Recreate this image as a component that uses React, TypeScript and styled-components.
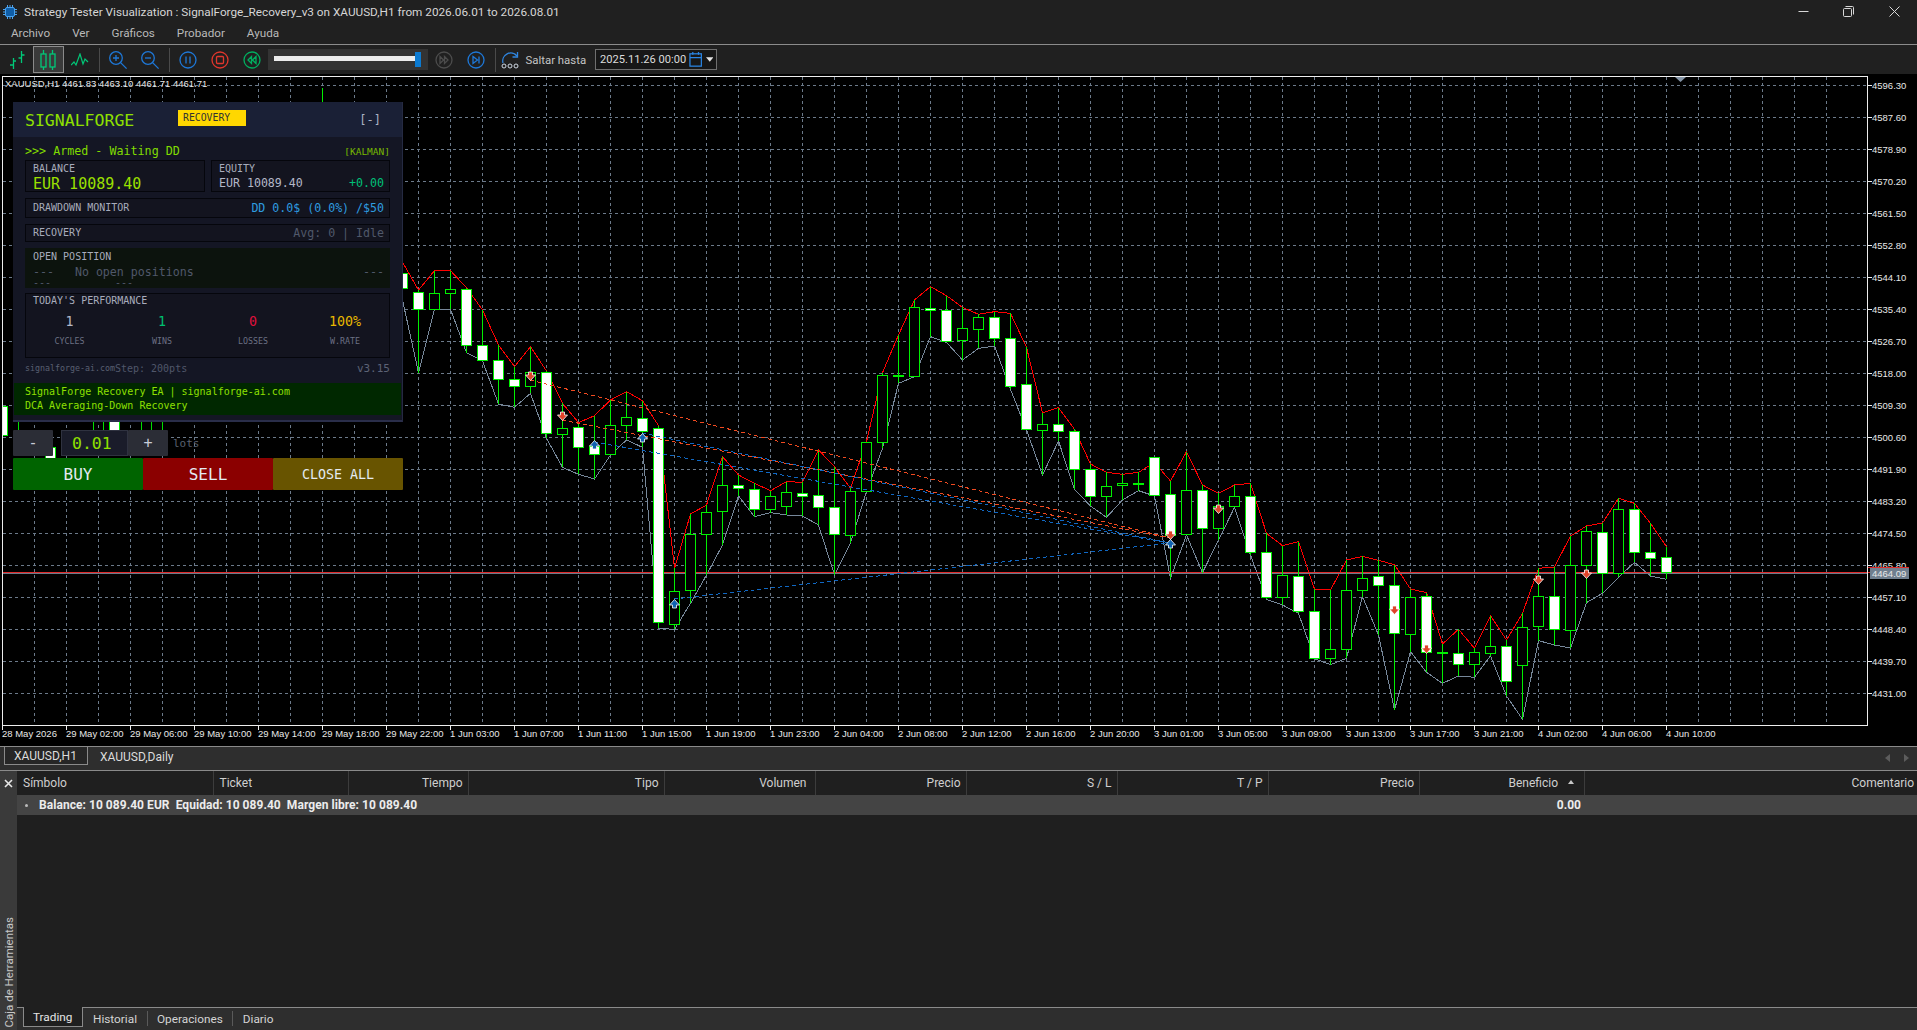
import styled, { createGlobalStyle } from "styled-components";

const GlobalStyle = createGlobalStyle`
  html, body, #root { margin: 0; height: 100%; }
  body {
    background: #1f1f1f;
    overflow: hidden;
    font-family: Roboto, "Liberation Sans", sans-serif;
    font-size: 12px;
    color: #d4d4d4;
  }
  * { box-sizing: border-box; }
`;

const MONO = `"DejaVu Sans Mono", "Liberation Mono", monospace`;

/* ---------- window chrome ---------- */

const Page = styled.div`
  display: flex;
  flex-direction: column;
  height: 100vh;
`;

const TitleBar = styled.div`
  display: flex;
  align-items: center;
  height: 23px;
  padding-left: 3px;
  background: #202020;
  flex: none;
`;

const TitleText = styled.span`
  margin-left: 7px;
  color: #d6d6d6;
  font-size: 11.75px;
  white-space: nowrap;
`;

const WindowButtons = styled.div`
  display: flex;
  margin-left: auto;
`;

const WindowButton = styled.div`
  display: flex;
  width: 45.5px;
  height: 20px;
  align-items: center;
  justify-content: center;
  color: #d8d8d8;
`;

const MenuBar = styled.div`
  display: flex;
  align-items: center;
  gap: 22px;
  height: 22px;
  padding: 0 0 2px 11px;
  background: #202020;
  border-bottom: 1px solid #8c8c8c;
  flex: none;
`;

const MenuItem = styled.span`
  color: #b9b9b9;
  font-size: 11.7px;
`;

const Toolbar = styled.div`
  display: flex;
  align-items: center;
  height: 29px;
  padding-left: 1px;
  background: #202020;
  flex: none;
`;

const ToolButton = styled.div<{ $selected?: boolean; $w?: number }>`
  display: flex;
  align-items: center;
  justify-content: center;
  width: ${(p) => p.$w ?? 32}px;
  height: 27px;
  border: 1px solid ${(p) => (p.$selected ? "#8a8a8a" : "transparent")};
  background: ${(p) => (p.$selected ? "#3a3a3a" : "transparent")};
  flex: none;
`;

const ToolSep = styled.div<{ $ml: number; $mr: number }>`
  width: 1px;
  height: 24px;
  margin: 0 ${(p) => p.$mr}px 0 ${(p) => p.$ml}px;
  background: #4a4a4a;
  flex: none;
`;

const SliderBox = styled.div`
  position: relative;
  width: 160px;
  height: 21px;
  background: #333333;
  flex: none;
`;

const SliderTrack = styled.div`
  position: absolute;
  left: 6px;
  right: 7px;
  top: 7px;
  height: 5px;
  background: #ececec;
`;

const SliderThumb = styled.div`
  position: absolute;
  right: 7px;
  top: 3px;
  width: 6px;
  height: 15px;
  background: #0b7ad1;
`;

const JumpLabel = styled.span`
  margin: 0 9px 0 5px;
  color: #c4c4c4;
  font-size: 11.4px;
  white-space: nowrap;
`;

const DateBox = styled.div`
  display: flex;
  align-items: center;
  gap: 3px;
  width: 122px;
  height: 21px;
  padding: 0 3px 0 4px;
  background: #171717;
  border: 1px solid #6f6f6f;
  color: #dcdcdc;
  font-size: 11.1px;
  white-space: nowrap;
  flex: none;
`;

const DateText = styled.span`
  margin-right: auto;
`;

/* ---------- chart ---------- */

const ChartArea = styled.div`
  position: relative;
  height: 672px;
  background: #000;
  flex: none;
`;

const ChartSvg = styled.svg`
  display: block;
  width: 1917px;
  height: 672px;
`;

const AxisText = styled.text`
  fill: #e8e8e8;
  font-family: "Liberation Sans", Arial, sans-serif;
  font-size: 9.5px;
`;

/* ---------- expert advisor panel (floats over the chart) ---------- */

const EaOverlay = styled.div`
  position: absolute;
  left: 13px;
  top: 28px;
  width: 390px;
  font-family: ${MONO};
`;

const Panel = styled.div`
  display: flex;
  flex-direction: column;
  height: 320px;
  background: #141624;
  border-right: 1px solid #252a42;
  border-bottom: 2px solid #2a2e4a;
`;

const PanelHeader = styled.div`
  display: flex;
  align-items: center;
  height: 35px;
  padding: 1px 21px 0 12px;
  background: #1a2036;
  flex: none;
`;

const Brand = styled.span`
  width: 153px;
  color: #8fe000;
  font-size: 16.5px;
`;

const ModeBadge = styled.span`
  display: flex;
  align-items: center;
  width: 68px;
  height: 16px;
  margin-top: -5px;
  padding-left: 5px;
  background: #ffd700;
  color: #333;
  font-size: 9.8px;
`;

const Collapse = styled.span`
  margin-left: auto;
  color: #a9b2c4;
  font-size: 12px;
`;

const PanelBody = styled.div`
  display: flex;
  flex-direction: column;
  padding: 0 12px;
`;

const StatusRow = styled.div`
  display: flex;
  align-items: center;
  justify-content: space-between;
  height: 23px;
  padding-top: 5px;
  color: #80dc00;
  font-size: 11.7px;
`;

const EngineTag = styled.span`
  color: #78b800;
  font-size: 9.5px;
`;

const CardRow = styled.div`
  display: grid;
  grid-template-columns: 180px 179px;
  gap: 6px;
  margin-bottom: 6px;
`;

const Card = styled.div<{ $h: number; $pt?: number; $tint?: boolean }>`
  height: ${(p) => p.$h}px;
  padding: ${(p) => p.$pt ?? 0}px 5px 0 7px;
  background: ${(p) => (p.$tint ? "#0c130d" : "#13141f")};
  border: 1px solid ${(p) => (p.$tint ? "#0c130d" : "#05060c")};
  overflow: hidden;
`;

const MetricRow = styled.div`
  display: flex;
  align-items: center;
  justify-content: space-between;
  height: 100%;
`;

const SpacedCard = styled(Card)<{ $mb: number }>`
  margin-bottom: ${(p) => p.$mb}px;
`;

const CardLabel = styled.div`
  color: #a8acbc;
  font-size: 10px;
  line-height: 12px;
  white-space: nowrap;
`;

const BalanceValue = styled.div`
  margin-top: 1px;
  color: #9be000;
  font-size: 15px;
  line-height: 16px;
  white-space: nowrap;
`;

const EquityLine = styled.div`
  display: flex;
  justify-content: space-between;
  align-items: baseline;
  margin-top: 1px;
  color: #b4b8c8;
  font-size: 11.6px;
  line-height: 14px;
  white-space: nowrap;
`;

const DeltaValue = styled.span`
  color: #00c078;
`;

const MetricValue = styled.span<{ $color: string }>`
  color: ${(p) => p.$color};
  font-size: 11.6px;
  white-space: nowrap;
`;

const PositionLine = styled.div`
  display: flex;
  justify-content: space-between;
  color: #50586a;
  font-size: 11.6px;
  line-height: 13px;
  margin-top: 3px;
  white-space: nowrap;
`;

const PositionMessage = styled.span`
  margin: 0 auto 0 21px;
`;

const PositionGap = styled.span<{ $w: number }>`
  width: ${(p) => p.$w}px;
  flex: none;
`;

const PositionTail = styled.div`
  display: flex;
  color: #50586a;
  font-size: 10px;
  line-height: 10px;
  margin-top: -1px;
  white-space: nowrap;
`;

const PerfGrid = styled.div`
  display: grid;
  grid-template-columns: 85px 100px 82px 102px;
  margin: 7px 0 0 -6px;
  width: 369px;
  justify-items: center;
`;

const PerfCell = styled.div`
  display: flex;
  flex-direction: column;
  align-items: center;
`;

const PerfValue = styled.div<{ $color: string }>`
  color: ${(p) => p.$color};
  font-size: 13.3px;
  line-height: 16px;
`;

const PerfLabel = styled.div`
  margin-top: 6px;
  color: #6c7184;
  font-size: 8.3px;
  line-height: 10px;
`;

const PanelFooter = styled.div`
  display: flex;
  align-items: center;
  height: 25px;
  padding: 0 0 5px 0;
  color: #50566a;
  font-size: 10px;
  white-space: nowrap;
`;

const FooterUrl = styled.span`
  color: #5a6072;
  font-size: 8.3px;
`;

const FooterVersion = styled.span`
  margin-left: auto;
  color: #5c6276;
  font-size: 11px;
`;

const Banner = styled.div`
  height: 32px;
  margin: 0 1px;
  padding: 2px 11px;
  background: #002800;
  color: #8fe000;
  font-size: 10px;
  line-height: 14px;
  white-space: nowrap;
  flex: none;
`;

const LotRow = styled.div`
  display: flex;
  align-items: center;
  height: 26px;
  margin-top: 8px;
`;

const LotButton = styled.div<{ $gap?: number }>`
  display: flex;
  align-items: center;
  justify-content: center;
  width: 40px;
  height: 26px;
  margin-right: ${(p) => p.$gap ?? 0}px;
  background: #2b2d36;
  border-radius: 1px;
  color: #c8ccd8;
  font-size: 15px;
`;

const LotInput = styled.div`
  display: flex;
  align-items: center;
  width: 67px;
  height: 26px;
  padding-left: 10px;
  background: #1a1c2a;
  border: 1px solid #2f3240;
  color: #8fe000;
  font-size: 16.5px;
`;

const LotUnit = styled.span`
  margin-left: 5px;
  color: #5a6070;
  font-size: 11px;
`;

const ActionRow = styled.div`
  display: grid;
  grid-template-columns: repeat(3, 130px);
  height: 32px;
  margin-top: 2px;
`;

const ActionButton = styled.div<{ $bg: string; $size: number }>`
  display: flex;
  align-items: center;
  justify-content: center;
  background: ${(p) => p.$bg};
  color: #e4ebf2;
  font-size: ${(p) => p.$size}px;
  border-radius: 1px;
`;

/* ---------- lower panes ---------- */

const ChartTabs = styled.div`
  display: flex;
  height: 25px;
  padding-left: 4px;
  background: #2e2e2e;
  border-top: 1px solid #8a8a8a;
  border-bottom: 1px solid #8a8a8a;
  flex: none;
`;

const ChartTab = styled.div<{ $active?: boolean }>`
  display: flex;
  align-items: center;
  width: ${(p) => (p.$active ? "84px" : "auto")};
  height: ${(p) => (p.$active ? 18 : 19)}px;
  padding-left: ${(p) => (p.$active ? 9 : 0)}px;
  margin-left: ${(p) => (p.$active ? 0 : 12)}px;
  background: ${(p) => (p.$active ? "#262626" : "transparent")};
  border: ${(p) => (p.$active ? "1px solid #8a8a8a" : "none")};
  border-top: none;
  color: #dcdcdc;
`;

const TabArrows = styled.div`
  display: flex;
  gap: 14px;
  align-items: center;
  margin-left: auto;
  padding-right: 8px;
  height: 21px;
`;

const Toolbox = styled.div`
  display: flex;
  flex: 1;
  min-height: 0;
`;

const ToolboxSide = styled.div`
  display: flex;
  flex-direction: column;
  align-items: center;
  justify-content: space-between;
  width: 17px;
  background: #3a3a3a;
  flex: none;
`;

const CloseMark = styled.div`
  height: 24px;
  display: flex;
  align-items: center;
  color: #e8e8e8;
`;

const SideLabel = styled.span`
  writing-mode: vertical-rl;
  transform: rotate(180deg);
  margin-bottom: 3px;
  color: #c8c8c8;
  font-size: 11.5px;
  white-space: nowrap;
`;

const ToolboxMain = styled.div`
  display: flex;
  flex-direction: column;
  flex: 1;
  min-width: 0;
  background: #1f1f1f;
`;

const COLUMNS = "196.5px 135px 120px 196px 151px 151px 151px 151px 151.5px 165px 1fr";

const HeaderRow = styled.div`
  display: grid;
  grid-template-columns: ${COLUMNS};
  height: 24px;
  flex: none;
`;

const HeaderCell = styled.div<{ $right?: boolean; $pr?: number }>`
  display: flex;
  align-items: center;
  justify-content: ${(p) => (p.$right ? "flex-end" : "flex-start")};
  gap: 10px;
  padding: 0 ${(p) => p.$pr ?? 5}px 0 6px;
  border-right: 1px solid #3c3c3c;
  color: #cfcfcf;
  &:last-child { border-right: none; padding-right: 3px; }
`;

const SortCaret = styled.span`
  width: 0;
  height: 0;
  margin: 0 5px 2px 0;
  border-left: 3.5px solid transparent;
  border-right: 3.5px solid transparent;
  border-bottom: 4px solid #c8c8c8;
`;

const BalanceRow = styled.div`
  display: grid;
  grid-template-columns: ${COLUMNS};
  height: 20px;
  align-items: center;
  background: #444444;
  color: #ececec;
  font-weight: 700;
  flex: none;
`;

const BalanceText = styled.div`
  grid-column: 1 / 10;
  display: flex;
  align-items: center;
  padding-left: 8px;
  letter-spacing: 0.05px;
  white-space: nowrap;
`;

const RowBullet = styled.span`
  width: 3px;
  height: 3px;
  margin-right: 11px;
  background: #bbb;
  border-radius: 50%;
`;

const BalanceProfit = styled.div`
  text-align: right;
  padding-right: 4px;
`;

const TableBody = styled.div`
  flex: 1;
`;

const BottomTabs = styled.div`
  display: flex;
  height: 23px;
  background: #2e2e2e;
  font-size: 11.8px;
  flex: none;
`;

const TabEdge = styled.div`
  width: 6px;
  border-top: 1px solid #8a8a8a;
  flex: none;
`;

const ActiveTab = styled.div`
  display: flex;
  align-items: center;
  width: 60px;
  height: 20px;
  padding-left: 9px;
  background: #1f1f1f;
  border: 1px solid #8a8a8a;
  border-top: none;
  color: #e4e4e4;
`;

const TabRest = styled.div`
  display: flex;
  align-items: center;
  flex: 1;
  height: 21px;
  padding-left: 10px;
  border-top: 1px solid #8a8a8a;
  box-sizing: content-box;
`;

const TabItem = styled.span`
  color: #d4d4d4;
`;

const TabDivider = styled.span`
  width: 1px;
  height: 15px;
  margin: 0 9.5px;
  background: #5a5a5a;
`;

/* ---------- chart data, in page pixels ---------- */

type Candle = { x: number; hi: number; top: number; bot: number; lo: number; white: boolean };

// [high, bodyTop, bodyBottom, low, white], read off at 3x and stepped 16px apart
type Raw = [number, number, number, number, number];

const block = (startX: number, originY: number, rows: Raw[]): Candle[] =>
  rows.map(([hi, top, bot, lo, white], i) => ({
    x: startX + i * 16,
    hi: originY + hi / 3,
    top: originY + top / 3,
    bot: originY + bot / 3,
    lo: originY + lo / 3,
    white: white === 1,
  }));

const candles: Candle[] = [
  { x: 2, hi: 404, top: 406, bot: 435, lo: 437, white: true },
  { x: 114, hi: 400, top: 416, bot: 430, lo: 432, white: true },
  { x: 50, hi: 440, top: 447, bot: 470, lo: 472, white: true },
  { x: 402, hi: 262, top: 273, bot: 288, lo: 300, white: true },
  ...block(418, 260, [
    [90, 97, 148, 338, 1], [32, 100, 148, 148, 0], [32, 88, 100, 148, 0], [83, 88, 256, 278, 1],
    [150, 256, 301, 303, 1], [255, 301, 358, 432, 1], [320, 358, 379, 442, 1], [260, 338, 379, 400, 0],
    [333, 338, 520, 535, 1], [430, 505, 523, 622, 0], [488, 502, 562, 643, 1], [467, 558, 583, 657, 1],
    [420, 496, 583, 585, 0], [395, 472, 496, 540, 0], [422, 475, 515, 562, 1], [497, 505, 1087, 1105, 1],
    [925, 994, 1092, 1108, 0], [762, 823, 992, 1030, 0], [735, 757, 823, 945, 0], [590, 677, 754, 855, 0],
    [645, 677, 685, 708, 1], [670, 688, 748, 770, 1], [692, 709, 748, 758, 0], [665, 697, 739, 765, 0],
    [667, 701, 709, 768, 1], [570, 707, 742, 795, 1], [620, 742, 823, 945, 1], [685, 694, 826, 848, 0],
    [545, 547, 694, 695, 0], [338, 346, 547, 565, 0],
  ]),
  ...block(898, 270, [
    [195, 316, 318, 340, 0], [90, 112, 320, 320, 0], [50, 116, 120, 200, 1], [77, 121, 214, 217, 1],
    [112, 176, 212, 270, 0], [133, 142, 178, 235, 0], [125, 142, 205, 228, 1], [130, 205, 350, 358, 1],
    [232, 343, 478, 480, 1], [428, 463, 482, 615, 0], [413, 463, 484, 513, 1], [478, 485, 598, 658, 1],
    [582, 598, 679, 708, 1], [607, 650, 679, 742, 0], [613, 640, 647, 690, 0], [607, 641, 644, 662, 0],
    [578, 563, 677, 678, 1], [633, 673, 795, 925, 1], [545, 661, 794, 795, 0], [645, 661, 775, 908, 1],
    [670, 709, 775, 810, 0], [645, 679, 710, 712, 0], [640, 679, 847, 855, 1], [790, 847, 982, 988, 1],
    [827, 916, 982, 1005, 0], [815, 920, 1024, 1030, 1], [957, 1024, 1166, 1166, 1], [960, 1138, 1166, 1184, 0],
  ]),
  ...block(1346, 440, [
    [360, 452, 628, 655, 0], [349, 415, 451, 470, 0], [361, 410, 436, 585, 1], [374, 436, 580, 810, 1],
    [447, 472, 583, 635, 0], [458, 470, 637, 697, 1], [612, 637, 640, 730, 0], [568, 641, 673, 708, 1],
    [625, 637, 673, 712, 0], [527, 619, 640, 648, 0], [600, 620, 724, 768, 1], [520, 562, 676, 838, 0],
    [385, 470, 559, 602, 0], [381, 470, 568, 615, 1], [288, 377, 571, 624, 0], [258, 274, 377, 488, 0],
    [249, 277, 400, 460, 1], [175, 208, 400, 412, 0], [190, 208, 337, 367, 1], [250, 337, 355, 408, 1],
    [320, 352, 397, 418, 1],
  ]),
];

const zigzag = candles.filter((c) => c.x >= 402);
const highLine = zigzag.map((c) => `${c.x + 0.5},${c.hi}`).join(" ");
const lowLine = zigzag.map((c) => `${c.x + 0.5},${c.lo}`).join(" ");

// wick stubs peeking out under the panel
const stubs: [number, number, number][] = [
  [18, 422, 430], [93, 422, 430], [103, 422, 430], [141, 422, 430], [151, 422, 430], [162, 422, 430],
];

const tradeLines = [
  { x1: 530, y1: 380, x2: 1170, y2: 538, color: "#f04a20" },
  { x1: 562, y1: 420, x2: 1170, y2: 538, color: "#f04a20" },
  { x1: 594, y1: 442, x2: 1170, y2: 543, color: "#1068c4" },
  { x1: 642, y1: 433, x2: 1170, y2: 543, color: "#1068c4" },
  { x1: 674, y1: 599, x2: 1170, y2: 543, color: "#1068c4" },
];

const sellMarks: [number, number][] = [
  [530, 376], [562, 416], [1170, 535], [1218, 509], [1394, 610], [1426, 649], [1538, 580], [1586, 574],
];
const buyMarks: [number, number][] = [[594, 445], [642, 438], [674, 604], [1170, 544]];

const prices = [
  "4596.30", "4587.60", "4578.90", "4570.20", "4561.50", "4552.80", "4544.10", "4535.40", "4526.70", "4518.00",
  "4509.30", "4500.60", "4491.90", "4483.20", "4474.50", "4465.80", "4457.10", "4448.40", "4439.70", "4431.00",
];

const times = [
  "29 May 02:00", "29 May 06:00", "29 May 10:00", "29 May 14:00", "29 May 18:00", "29 May 22:00",
  "1 Jun 03:00", "1 Jun 07:00", "1 Jun 11:00", "1 Jun 15:00", "1 Jun 19:00", "1 Jun 23:00",
  "2 Jun 04:00", "2 Jun 08:00", "2 Jun 12:00", "2 Jun 16:00", "2 Jun 20:00",
  "3 Jun 01:00", "3 Jun 05:00", "3 Jun 09:00", "3 Jun 13:00", "3 Jun 17:00", "3 Jun 21:00",
  "4 Jun 02:00", "4 Jun 06:00", "4 Jun 10:00",
];

const GRID = "#6c7a8a";

const Chart = () => (
  <ChartSvg viewBox="0 74 1917 672">
    <g stroke={GRID} strokeDasharray="3 3" shapeRendering="crispEdges">
      {prices.map((_, i) => (
        <line key={i} x1={3} x2={1867} y1={85.5 + i * 32} y2={85.5 + i * 32} />
      ))}
      {Array.from({ length: 58 }, (_, i) => (
        <line key={i} x1={2.5 + i * 32} x2={2.5 + i * 32} y1={77} y2={725} />
      ))}
    </g>

    <polyline points={lowLine} fill="none" stroke="#77889a" shapeRendering="crispEdges" />
    <polyline points={highLine} fill="none" stroke="#ff0000" shapeRendering="crispEdges" />

    <line x1={3} x2={1908} y1={572.5} y2={572.5} stroke="#e02a2a" shapeRendering="crispEdges" />
    <line x1={3} x2={1868} y1={573.5} y2={573.5} stroke="#6c7a8a" shapeRendering="crispEdges" />

    <g shapeRendering="crispEdges">
      {stubs.map(([x, y1, y2], i) => (
        <line key={i} x1={x + 0.5} x2={x + 0.5} y1={y1} y2={y2} stroke="#00e000" />
      ))}
      {candles.map((c) => (
        <g key={c.x} stroke="#00f000">
          <line x1={c.x + 0.5} x2={c.x + 0.5} y1={c.hi} y2={c.lo} />
          <rect
            x={c.x - 4.5}
            y={Math.min(c.top, c.bot)}
            width={10}
            height={Math.max(1, Math.abs(c.bot - c.top))}
            fill={c.white ? "#ffffff" : "#000000"}
          />
        </g>
      ))}
    </g>

    <rect x={0} y={74} width={2} height={652} fill="#000" />
    <path d="M1675 77h11l-5.5 5z" fill="#8494a6" />

    {tradeLines.map((t, i) => (
      <line key={i} x1={t.x1} y1={t.y1} x2={t.x2} y2={t.y2} stroke={t.color} strokeDasharray="4 3" shapeRendering="crispEdges" />
    ))}

    {sellMarks.map(([x, y], i) => (
      <path
        key={i}
        d={`M${x - 1.5} ${y - 4}h4v3h3l-5 5.5l-5 -5.5h3z`}
        fill="#e0442a"
        stroke="#fff"
        strokeWidth={0.8}
      />
    ))}
    {buyMarks.map(([x, y], i) => (
      <path
        key={i}
        d={`M${x - 1.5} ${y + 4}h4v-3h3l-5 -5.5l-5 5.5h3z`}
        fill="#0f62b0"
        stroke="#fff"
        strokeWidth={0.8}
      />
    ))}

    <rect x={2.5} y={76.5} width={1865} height={649} fill="none" stroke="#ededed" shapeRendering="crispEdges" />

    {prices.map((p, i) => (
      <g key={p}>
        <line x1={1868} x2={1872} y1={85.5 + i * 32} y2={85.5 + i * 32} stroke="#ededed" shapeRendering="crispEdges" />
        <AxisText x={1872} y={88.5 + i * 32}>{p}</AxisText>
      </g>
    ))}
    <rect x={1870} y={567} width={39} height={12} fill="#6f7e8e" />
    <rect x={1868} y={567} width={41} height={1} fill="#e02a2a" />
    <AxisText x={1872} y={576.5}>4464.09</AxisText>

    <line x1={2.5} x2={2.5} y1={725} y2={730} stroke="#ededed" shapeRendering="crispEdges" />
    <AxisText x={2} y={737}>28 May 2026</AxisText>
    {times.map((t, i) => (
      <g key={t}>
        <line x1={66.5 + i * 64} x2={66.5 + i * 64} y1={725} y2={730} stroke="#ededed" shapeRendering="crispEdges" />
        <AxisText x={66 + i * 64} y={737}>{t}</AxisText>
      </g>
    ))}

    <AxisText x={5} y={87}>XAUUSD,H1  4461.83 4463.10 4461.71 4461.71</AxisText>
    <line x1={322.5} x2={322.5} y1={88} y2={102} stroke="#00f000" shapeRendering="crispEdges" />
  </ChartSvg>
);

/* ---------- icons ---------- */

const ChipIcon = () => (
  <svg width="14" height="14" viewBox="0 0 14 14" fill="none">
    <rect x="2.5" y="2.5" width="9" height="9" rx="1.5" fill="#0f5ea8" stroke="#4aa3ef" />
    <path d="M4.5 0v2M7 0v2M9.5 0v2M4.5 12v2M7 12v2M9.5 12v2M0 4.5h2M0 7h2M0 9.5h2M12 4.5h2M12 7h2M12 9.5h2" stroke="#4aa3ef" />
  </svg>
);

const BarsIcon = () => (
  <svg width="16" height="20" viewBox="0 0 16 20" fill="none" stroke="#00c878" strokeWidth="1.3">
    <path d="M4.5 8v11M1 15h3.5M4.5 11h2.5M12.5 1v12M9.5 8h3M12.5 5h3" />
  </svg>
);

const CandlesIcon = () => (
  <svg width="18" height="22" viewBox="0 0 18 22" fill="none" stroke="#00c878" strokeWidth="1.3">
    <path d="M4.5 1v4M4.5 18v3M13.5 1v4M13.5 18v3" />
    <rect x="2" y="5" width="5" height="13" />
    <rect x="11" y="5" width="5" height="13" />
  </svg>
);

const LineIcon = () => (
  <svg width="18" height="14" viewBox="0 0 18 14" fill="none" stroke="#00c878" strokeWidth="1.2">
    <path d="M0 12l3-3 2 3 4-11 3 10 2-5 3 3" />
  </svg>
);

const LensIcon = ({ plus }: { plus?: boolean }) => (
  <svg width="20" height="20" viewBox="0 0 20 20" fill="none" stroke="#1e78d8" strokeWidth="1.3">
    <circle cx="8" cy="8" r="6.3" />
    <path d="M12.6 12.6l6 6" />
    <path d={plus ? "M5 8h6M8 5v6" : "M5 8h6"} />
  </svg>
);

const Ring = ({ color, children }: { color: string; children: React.ReactNode }) => (
  <svg width="18" height="18" viewBox="0 0 18 18" fill="none" stroke={color} strokeWidth="1.3">
    <circle cx="9" cy="9" r="8" />
    {children}
  </svg>
);

const JumpIcon = () => (
  <svg width="20" height="20" viewBox="0 0 20 20" fill="none">
    <path d="M2 13a8 8 0 0 1 14-7" stroke="#2f86e0" strokeWidth="1.3" />
    <path d="M16.5 2v5h-5" stroke="#2f86e0" strokeWidth="1.3" />
    <circle cx="3" cy="16" r="2" stroke="#cfd8e4" />
    <circle cx="9" cy="16" r="2" stroke="#cfd8e4" />
    <circle cx="15" cy="16" r="2" stroke="#cfd8e4" />
  </svg>
);

const CalendarIcon = () => (
  <svg width="14" height="17" viewBox="0 0 14 17" fill="none" stroke="#2a86e6" strokeWidth="1.3">
    <rect x="1" y="2.5" width="12" height="13" />
    <path d="M1 6.5h12M4 0.5v3M10 0.5v3" />
  </svg>
);

const DateCaret = () => (
  <svg width="8" height="5" viewBox="0 0 8 5"><path d="M0 0h8L4 5z" fill="#e4e4e4" /></svg>
);

const performance = [
  { value: "1", label: "CYCLES", color: "#b4b8c8" },
  { value: "1", label: "WINS", color: "#00c070" },
  { value: "0", label: "LOSSES", color: "#e0103c" },
  { value: "100%", label: "W.RATE", color: "#e8b800" },
];

const App = () => (
  <Page>
    <GlobalStyle />

    <TitleBar>
      <ChipIcon />
      <TitleText>
        Strategy Tester Visualization : SignalForge_Recovery_v3 on XAUUSD,H1 from 2026.06.01 to 2026.08.01
      </TitleText>
      <WindowButtons>
        <WindowButton>
          <svg width="11" height="11" viewBox="0 0 11 11" stroke="currentColor"><path d="M0.5 5.5h10" /></svg>
        </WindowButton>
        <WindowButton>
          <svg width="11" height="11" viewBox="0 0 11 11" fill="none" stroke="currentColor">
            <rect x="0.5" y="2.5" width="8" height="8" rx="1" />
            <path d="M2.5 0.5h7a1 1 0 0 1 1 1v7" />
          </svg>
        </WindowButton>
        <WindowButton>
          <svg width="11" height="11" viewBox="0 0 11 11" stroke="currentColor"><path d="M0.5 0.5l10 10M10.5 0.5l-10 10" /></svg>
        </WindowButton>
      </WindowButtons>
    </TitleBar>

    <MenuBar>
      <MenuItem>Archivo</MenuItem>
      <MenuItem>Ver</MenuItem>
      <MenuItem>Gráficos</MenuItem>
      <MenuItem>Probador</MenuItem>
      <MenuItem>Ayuda</MenuItem>
    </MenuBar>

    <Toolbar>
      <ToolButton $w={31.5}><BarsIcon /></ToolButton>
      <ToolButton $w={31.5} $selected><CandlesIcon /></ToolButton>
      <ToolButton $w={31.5}><LineIcon /></ToolButton>
      <ToolSep $ml={3} $mr={2} />
      <ToolButton><LensIcon plus /></ToolButton>
      <ToolButton><LensIcon /></ToolButton>
      <ToolSep $ml={3} $mr={2} />
      <ToolButton>
        <Ring color="#1e78d8"><path d="M7 5.5v7M11 5.5v7" /></Ring>
      </ToolButton>
      <ToolButton>
        <Ring color="#e0362c"><rect x="5.5" y="5.5" width="7" height="7" rx="1" /></Ring>
      </ToolButton>
      <ToolButton>
        <Ring color="#00b060"><path d="M8.5 5.5l-3.5 3.5 3.5 3.5zM13 5.5l-3.5 3.5 3.5 3.5z" /></Ring>
      </ToolButton>
      <SliderBox>
        <SliderTrack />
        <SliderThumb />
      </SliderBox>
      <ToolButton>
        <Ring color="#4c4c4c"><path d="M5 5.5l3.5 3.5-3.5 3.5zM9.5 5.5l3.5 3.5-3.5 3.5z" /></Ring>
      </ToolButton>
      <ToolButton>
        <Ring color="#1e78d8"><path d="M6 5.5l4.5 3.5-4.5 3.5zM12 5.5v7" /></Ring>
      </ToolButton>
      <ToolSep $ml={3} $mr={5} />
      <JumpIcon />
      <JumpLabel>Saltar hasta</JumpLabel>
      <DateBox>
        <DateText>2025.11.26 00:00</DateText>
        <CalendarIcon />
        <DateCaret />
      </DateBox>
    </Toolbar>

    <ChartArea>
      <Chart />
      <EaOverlay>
        <Panel>
          <PanelHeader>
            <Brand>SIGNALFORGE</Brand>
            <ModeBadge>RECOVERY</ModeBadge>
            <Collapse>[-]</Collapse>
          </PanelHeader>
          <PanelBody>
            <StatusRow>
              <span>&gt;&gt;&gt; Armed - Waiting DD</span>
              <EngineTag>[KALMAN]</EngineTag>
            </StatusRow>
            <CardRow>
              <Card $h={32} $pt={2}>
                <CardLabel>BALANCE</CardLabel>
                <BalanceValue>EUR 10089.40</BalanceValue>
              </Card>
              <Card $h={32} $pt={2}>
                <CardLabel>EQUITY</CardLabel>
                <EquityLine>
                  <span>EUR 10089.40</span>
                  <DeltaValue>+0.00</DeltaValue>
                </EquityLine>
              </Card>
            </CardRow>
            <SpacedCard $h={20} $mb={6}>
              <MetricRow>
                <CardLabel>DRAWDOWN MONITOR</CardLabel>
                <MetricValue $color="#2e9ce0">DD 0.0$ (0.0%) /$50</MetricValue>
              </MetricRow>
            </SpacedCard>
            <SpacedCard $h={18} $mb={6}>
              <MetricRow>
                <CardLabel>RECOVERY</CardLabel>
                <MetricValue $color="#50586a">Avg: 0 | Idle</MetricValue>
              </MetricRow>
            </SpacedCard>
            <SpacedCard $h={40} $mb={5} $pt={2} $tint>
              <CardLabel>OPEN POSITION</CardLabel>
              <PositionLine>
                <span>---</span>
                <PositionMessage>No open positions</PositionMessage>
                <span>---</span>
              </PositionLine>
              <PositionTail>
                <span>---</span>
                <PositionGap $w={64} />
                <span>---</span>
              </PositionTail>
            </SpacedCard>
            <Card $h={65} $pt={1}>
              <CardLabel>TODAY'S PERFORMANCE</CardLabel>
              <PerfGrid>
                {performance.map((m) => (
                  <PerfCell key={m.label}>
                    <PerfValue $color={m.color}>{m.value}</PerfValue>
                    <PerfLabel>{m.label}</PerfLabel>
                  </PerfCell>
                ))}
              </PerfGrid>
            </Card>
            <PanelFooter>
              <FooterUrl>signalforge-ai.com</FooterUrl>
              <span>Step: 200pts</span>
              <FooterVersion>v3.15</FooterVersion>
            </PanelFooter>
          </PanelBody>
          <Banner>
            <div>SignalForge Recovery EA | signalforge-ai.com</div>
            <div>DCA Averaging-Down Recovery</div>
          </Banner>
        </Panel>
        <LotRow>
          <LotButton $gap={8}>-</LotButton>
          <LotInput>0.01</LotInput>
          <LotButton>+</LotButton>
          <LotUnit>lots</LotUnit>
        </LotRow>
        <ActionRow>
          <ActionButton $bg="#006400" $size={16}>BUY</ActionButton>
          <ActionButton $bg="#8b0000" $size={16}>SELL</ActionButton>
          <ActionButton $bg="#685400" $size={13.3}>CLOSE ALL</ActionButton>
        </ActionRow>
      </EaOverlay>
    </ChartArea>

    <ChartTabs>
      <ChartTab $active>XAUUSD,H1</ChartTab>
      <ChartTab>XAUUSD,Daily</ChartTab>
      <TabArrows>
        <svg width="5" height="8" viewBox="0 0 5 8" fill="#5c5c5c"><path d="M5 0v8L0 4z" /></svg>
        <svg width="5" height="8" viewBox="0 0 5 8" fill="#5c5c5c"><path d="M0 0v8l5-4z" /></svg>
      </TabArrows>
    </ChartTabs>

    <Toolbox>
      <ToolboxSide>
        <CloseMark>
          <svg width="9" height="9" viewBox="0 0 9 9" stroke="currentColor" strokeWidth="1.6"><path d="M1 1l7 7M8 1l-7 7" /></svg>
        </CloseMark>
        <SideLabel>Caja de Herramientas</SideLabel>
      </ToolboxSide>
      <ToolboxMain>
        <HeaderRow>
          <HeaderCell>Símbolo</HeaderCell>
          <HeaderCell>Ticket</HeaderCell>
          <HeaderCell $right>Tiempo</HeaderCell>
          <HeaderCell $right>Tipo</HeaderCell>
          <HeaderCell $right $pr={8}>Volumen</HeaderCell>
          <HeaderCell $right>Precio</HeaderCell>
          <HeaderCell $right>S / L</HeaderCell>
          <HeaderCell $right>T / P</HeaderCell>
          <HeaderCell $right>Precio</HeaderCell>
          <HeaderCell $right>Beneficio<SortCaret /></HeaderCell>
          <HeaderCell $right>Comentario</HeaderCell>
        </HeaderRow>
        <BalanceRow>
          <BalanceText>
            <RowBullet />
            Balance: 10 089.40 EUR&nbsp;&nbsp;Equidad: 10 089.40&nbsp;&nbsp;Margen libre: 10 089.40
          </BalanceText>
          <BalanceProfit>0.00</BalanceProfit>
        </BalanceRow>
        <TableBody />
        <BottomTabs>
          <TabEdge />
          <ActiveTab>Trading</ActiveTab>
          <TabRest>
            <TabItem>Historial</TabItem>
            <TabDivider />
            <TabItem>Operaciones</TabItem>
            <TabDivider />
            <TabItem>Diario</TabItem>
          </TabRest>
        </BottomTabs>
      </ToolboxMain>
    </Toolbox>
  </Page>
);

export default App;
